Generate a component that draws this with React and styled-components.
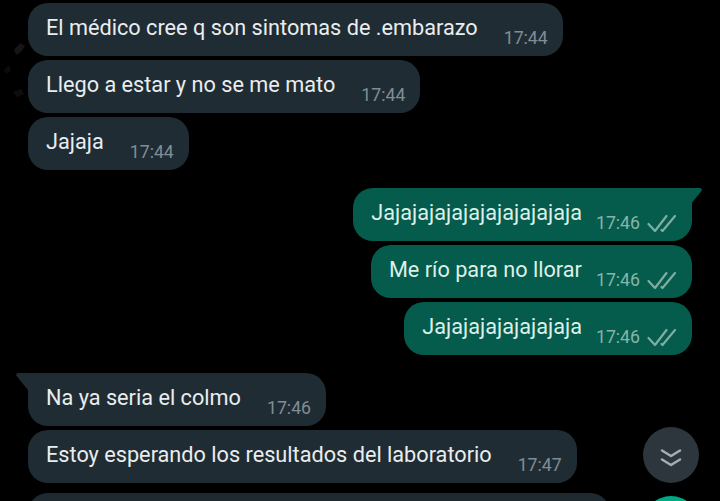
import React from "react";
import styled, { createGlobalStyle } from "styled-components";

const Global = createGlobalStyle`
  html, body { margin: 0; padding: 0; background: #000; }
  #root { width: 720px; height: 501px; }
`;

const Screen = styled.div`
  position: relative;
  width: 720px;
  height: 501px;
  overflow: hidden;
  background: #000;
  font-family: Roboto, "Noto Sans", sans-serif;
  display: flex;
  flex-direction: column;
  padding: 3px 28px 0;
  box-sizing: border-box;
`;

const Wallpaper = styled.svg`
  position: absolute;
  left: 0;
  top: 0;
`;

const Row = styled.div`
  display: flex;
  justify-content: ${(p) => (p.$out ? "flex-end" : "flex-start")};
  margin-top: ${(p) => p.$top || 4}px;
  &:first-of-type { margin-top: 0; }
`;

const Bubble = styled.div`
  position: relative;
  height: 53px;
  box-sizing: border-box;
  display: flex;
  align-items: flex-start;
  gap: ${(p) => (p.$out ? 14 : 26)}px;
  padding: 11px 15px 0 18px;
  background: ${(p) => (p.$out ? "#055c4c" : "#202c33")};
  border-radius: 20px;
  ${(p) => p.$tail && (p.$out ? "border-top-right-radius: 0;" : "border-top-left-radius: 0;")}
`;

const Text = styled.span`
  font-size: 21.7px;
  line-height: 28px;
  color: ${(p) => (p.$out ? "#dcefe9" : "#e9edef")};
  white-space: nowrap;
`;

const Meta = styled.span`
  display: flex;
  align-items: center;
  gap: 7px;
  margin-top: 13px;
  height: 22px;
`;

const Time = styled.span`
  font-size: 17.7px;
  line-height: 22px;
  color: ${(p) => (p.$out ? "#85b5a9" : "#808d95")};
  white-space: nowrap;
`;

const Tail = styled.svg`
  position: absolute;
  top: 0;
  ${(p) => (p.$out ? "right: -12px;" : "left: -13px;")}
`;

const Stripe = styled.div`
  width: 568px;
  height: 3px;
  margin-top: 4px;
  background: #1a2329;
  border-radius: 14px 14px 0 0;
`;

const NextBubble = styled.div`
  width: 582px;
  height: 40px;
  margin-top: 6px;
  flex: none;
  background: #1f2a30;
  border-radius: 20px 20px 0 0;
`;

const ScrollButton = styled.div`
  position: absolute;
  left: 643px;
  top: 427px;
  width: 56px;
  height: 56px;
  box-sizing: border-box;
  padding-top: 5px;
  border-radius: 50%;
  background: #2c363c;
  display: flex;
  align-items: center;
  justify-content: center;
`;

const Fab = styled.div`
  position: absolute;
  left: 643px;
  top: 496px;
  width: 56px;
  height: 56px;
  border-radius: 50%;
  background: #00a884;
`;

const TickIcon = styled.svg`
  fill: none;
  stroke: #7fada1;
  stroke-width: 2.2;
  stroke-linecap: round;
  stroke-linejoin: round;
`;

const Ticks = () => (
  <TickIcon width="30" height="20" viewBox="0 0 30 20">
    <path d="M1.5 11 L8 18 L19.5 3" />
    <path d="M14.5 17 L15.5 18 L28 3" />
  </TickIcon>
);

const Message = ({ text, time, out, tail, top }) => (
  <Row $out={out} $top={top}>
    <Bubble $out={out} $tail={tail}>
      {tail && (
        <Tail $out={out} width="14" height="20" viewBox="0 0 14 20">
          {out ? (
            <path d="M0 0 H10 Q12.5 0.5 11.5 3 L0 17 Z" fill="#055c4c" />
          ) : (
            <path d="M13 0 H3 Q0.5 0.5 1.5 3 L13 17 Z" fill="#202c33" />
          )}
        </Tail>
      )}
      <Text $out={out}>{text}</Text>
      <Meta>
        <Time $out={out}>{time}</Time>
        {out && <Ticks />}
      </Meta>
    </Bubble>
  </Row>
);

export default function App() {
  return (
    <>
      <Global />
      <Screen>
        <Wallpaper width="30" height="110" viewBox="0 0 30 110">
          <path d="M14 50 l6 -7 l5 3 l-4 6 l-5 3 z" fill="#151515" />
          <path d="M4 70 l5 -5 l2 6 l-5 3 z" fill="#0b0b0b" />
          <path d="M13 92 l8 -3 l3 5 l-7 3 z" fill="#0e0e0e" />
        </Wallpaper>
        <Message text="El médico cree q son sintomas de .embarazo" time="17:44" />
        <Message text="Llego a estar y no se me mato" time="17:44" />
        <Message text="Jajaja" time="17:44" />
        <Message out tail top={18} text="Jajajajajajajajajajajaja" time="17:46" />
        <Message out text="Me río para no llorar" time="17:46" />
        <Message out text="Jajajajajajajajaja" time="17:46" />
        <Message tail top={18} text="Na ya seria el colmo" time="17:46" />
        <Message text="Estoy esperando los resultados del laboratorio" time="17:47" />
        <Stripe />
        <NextBubble />
        <ScrollButton>
          <svg width="22" height="20" viewBox="0 0 22 20" fill="none" stroke="#a3adb2" strokeWidth="2.6" strokeLinecap="round" strokeLinejoin="round">
            <path d="M2 2.5 L11 8 L20 2.5" />
            <path d="M2 11.5 L11 17 L20 11.5" />
          </svg>
        </ScrollButton>
        <Fab />
      </Screen>
    </>
  );
}
